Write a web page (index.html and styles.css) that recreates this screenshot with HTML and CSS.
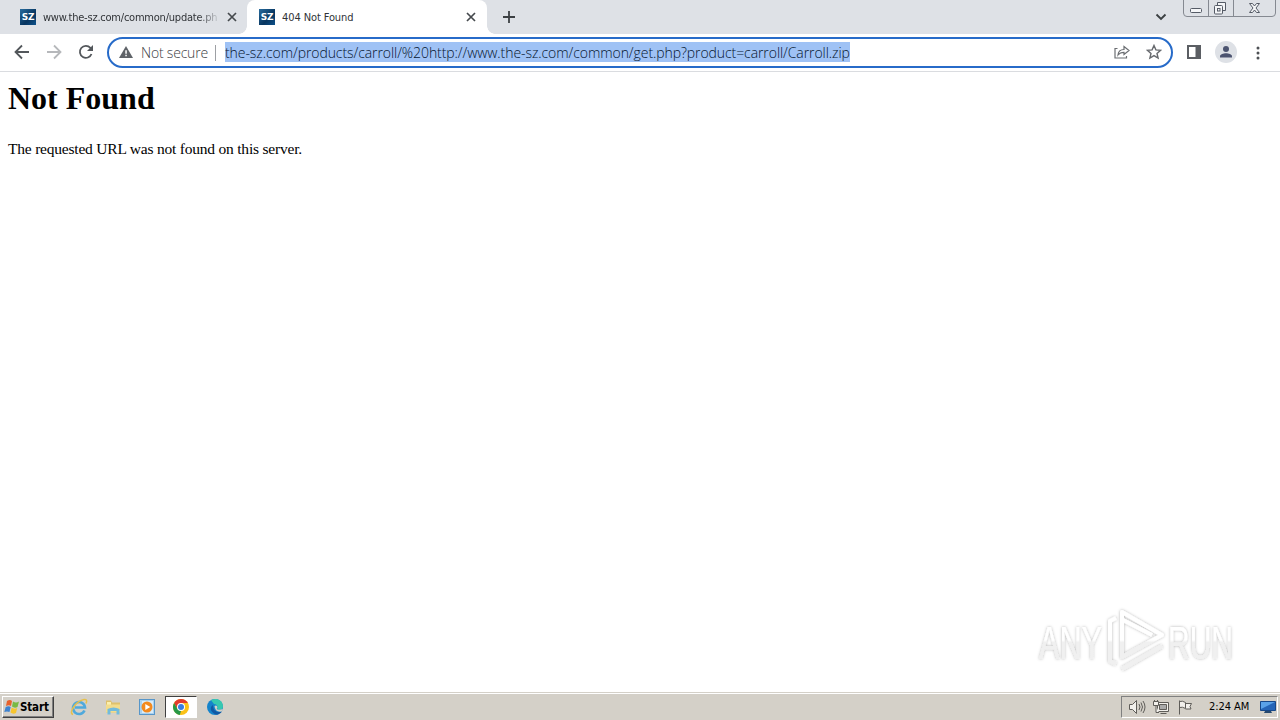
FILE: index.html
```html
<!DOCTYPE html>
<html lang="en">
<head>
<meta charset="utf-8">
<title>404 Not Found</title>
<link rel="stylesheet" href="styles.css">
</head>
<body>
<div class="screen">
  <header class="tabstrip">
    <div class="tab tab-first">
      <span class="favicon">SZ</span>
      <span class="tab-title fade"><span class="t-update">www.the-sz.com/common/update.ph</span></span>
      <svg class="close" viewBox="0 0 10 10"><path d="M1 1l8 8M9 1l-8 8"/></svg>
    </div>
    <div class="tab tab-active">
      <span class="favicon">SZ</span>
      <span class="tab-title"><span class="t-404">404 Not Found</span></span>
      <svg class="close" viewBox="0 0 10 10"><path d="M1 1l8 8M9 1l-8 8"/></svg>
    </div>
    <svg class="new-tab" viewBox="0 0 12 12"><path d="M6 0v12M0 6h12"/></svg>
    <svg class="tab-search" viewBox="0 0 12 8"><path d="M1.500 1.500L6 6l4.500-4.500"/></svg>
    <svg class="window-controls" viewBox="0 0 94 18">
      <path class="frame" d="M.5 0v13q0 3.500 3.500 3.500h85q3.500 0 3.500-3.500V0M25.500 0v16M50.500 0v16"/>
      <rect class="glyph" x="7.500" y="8.500" width="11" height="4" rx="1"/>
      <path class="glyph" d="M34.500 5V2.500h8v8H40"/>
      <rect class="glyph" x="31.500" y="5.500" width="8" height="8.500" rx="1"/>
      <rect class="glyph" x="34.500" y="8.500" width="2.500" height="2.500"/>
      <path class="glyph" d="M66.500 3.500h3l2 2.500 2-2.500h3l-3.500 4.500 3.500 4.500h-3l-2-2.500-2 2.500h-3L70 8z"/>
    </svg>
  </header>

  <nav class="toolbar">
    <svg class="nav-icon back" viewBox="0 0 16 16"><path d="M15 8H2M8 1.500L1.500 8 8 14.500"/></svg>
    <svg class="nav-icon forward" viewBox="0 0 16 16"><path d="M1 8h13M8 1.500L14.500 8 8 14.500"/></svg>
    <svg class="nav-icon reload" viewBox="0 0 16 16"><path d="M13.500 10A6 6 0 1 1 12.400 3.900L14 5.500"/><path class="solid" d="M15 1v6H9z"/></svg>
    <div class="omnibox">
      <svg class="warning" viewBox="0 0 14 12"><path fill="#5f6368" d="M7 0l7 12H0z"/><path fill="#fff" d="M6.300 4.300h1.500v3.500H6.300zM6.300 8.800h1.500v1.500H6.300z"/></svg>
      <span class="not-secure">Not secure</span>
      <span class="divider"></span>
      <span class="url">the-sz.com/products/carroll/%20http://www.the-sz.com/common/get.php?product=carroll/Carroll.zip</span>
      <svg class="share" viewBox="0 0 16 14"><path d="M3.500 3.500H1V13h11.500v-2M4 10c.3-4 2.500-5.500 6-5.500V1.500L15 5.500l-5 4V7.300C7.500 7.300 5.500 8 4 10z"/></svg>
      <svg class="star" viewBox="0 0 16 16"><path d="M8 1.500l1.900 4.400 4.700.4-3.600 3.100 1.100 4.600L8 11.600 3.900 14 5 9.400 1.400 6.300l4.700-.4z"/></svg>
    </div>
    <svg class="side-panel" viewBox="0 0 14 14"><path fill="#5b5e63" fill-rule="evenodd" d="M0 0h14v14H0zM2 2v10h6.500V2z"/></svg>
    <svg class="avatar" viewBox="0 0 22 22"><circle cx="11" cy="11" r="11" fill="#dee1e6"/><circle cx="11" cy="8" r="3" fill="#4c5470"/><path fill="#4c5470" d="M5 16.500v-1.200c0-2 3.500-3 6-3s6 1 6 3v1.200z"/></svg>
    <svg class="menu" viewBox="0 0 4 14"><circle cx="2" cy="2" r="1.500"/><circle cx="2" cy="7" r="1.500"/><circle cx="2" cy="12" r="1.500"/></svg>
  </nav>

  <main class="page">
    <h1>Not Found</h1>
    <p>The requested URL was not found on this server.</p>
    <svg class="watermark" viewBox="0 0 220 80">
      <defs>
        <filter id="soft" x="-10%" y="-10%" width="120%" height="120%"><feDropShadow dx="0" dy="0" stdDeviation="1.700" flood-color="#000" flood-opacity=".3"/></filter>
        <linearGradient id="shine" x1="0" y1="0" x2="0" y2="80" gradientUnits="userSpaceOnUse"><stop offset=".5" stop-color="#fff"/><stop offset=".53" stop-color="#f0f0f0"/></linearGradient>
      </defs>
      <g filter="url(#soft)">
        <text x="14" y="59" textLength="63" lengthAdjust="spacingAndGlyphs">ANY</text>
        <text x="143" y="59" textLength="65" lengthAdjust="spacingAndGlyphs">RUN</text>
        <path class="mark" d="M97 30V12l40 23-40 22V30M91 18l-6 3v40l6 3M97 69l40-23M98 20l29 15"/>
      </g>
    </svg>
  </main>

  <footer class="taskbar">
    <div class="start">
      <svg class="flag" viewBox="0 0 16 16"><path fill="#e8622c" d="M3 2q3-2 5 0L7 7Q5 5.500 2 7z"/><path fill="#78b943" d="M9 2.500q3 2 6 0L13.500 8q-3 1.500-5.500-.5z"/><path fill="#3e83d0" d="M1.700 8q3-1.500 5 0l-1.200 5Q3 12 .3 13z"/><path fill="#f7c52d" d="M7.700 8.500q2.500 2 5.500.5L12 14q-3 1.500-5.500-.5z"/></svg>
      <span class="start-text">Start</span>
    </div>
    <div class="launch">
      <svg viewBox="0 0 18 18"><path fill="none" stroke="#4fa9dc" stroke-width="2.600" d="M14.500 12.500A6 6 0 1 1 15 9.500H5"/><path fill="none" stroke="#e6c04c" stroke-width="1.500" d="M3 16.500C-2 15 6 3 14 1.500q4-.5 2 4"/></svg>
    </div>
    <div class="launch">
      <svg viewBox="0 0 18 18"><path fill="#dfc16c" d="M2 2.500h5l1 2h8v10H2z"/><path fill="#fbf0ae" d="M3 4h4v8H3z"/><path fill="#f3dc8c" d="M2 6.500h14v8H2z"/><path fill="#72bbdc" d="M3.500 11q6-3 12 0v5.500h-3V13h-6v3.500h-3z"/></svg>
    </div>
    <div class="launch">
      <svg viewBox="0 0 18 18"><rect x="1.500" y="1.500" width="15" height="15" fill="#a9d2f0" stroke="#5796c9"/><rect x="4" y="3" width="11" height="12" fill="#d9ecf9"/><circle cx="9" cy="9" r="5.500" fill="#f38a1e"/><path fill="#fff" d="M7.300 6l5 3-5 3z"/></svg>
    </div>
    <div class="launch pressed">
      <svg viewBox="0 0 18 18"><circle cx="9" cy="9" r="8" fill="#fbc116"/><path fill="#e33b2e" d="M2.100 5A8 8 0 0 1 15.900 5H9L5.500 11z"/><path fill="#279847" d="M2.100 5l3.400 6 3.500 2-1.200 4A8 8 0 0 1 2.100 5z"/><circle cx="9" cy="9" r="4" fill="#fff"/><circle cx="9" cy="9" r="3" fill="#397de2"/></svg>
    </div>
    <div class="launch">
      <svg viewBox="0 0 18 18"><circle cx="9" cy="9" r="8" fill="#1584cb"/><path fill="#37c8b0" d="M5 2.200C10-.7 16.500 2 17 8c0 4-4 4.500-6 3 1.500-2 0-5-3-5z"/><path fill="#1259a4" d="M7 7c-5 3-1 9 4 9.700 2-.3 3.800-1.500 5-3.200-4 1.500-9 0-9-6.500z"/><path fill="#d4d0c8" d="M8.500 8q1.500-1 2.500 0 1 1.500-.3 3 1.500 1.500 6.300 0l-1.500 2.500q-6.500 1-7-5.500z"/></svg>
    </div>
    <div class="tray">
      <svg class="tray-icon" viewBox="0 0 18 16"><path d="M1.500 5.500h3l4-4v13l-4-4h-3z"/><path class="thin" d="M11 5q2 3 0 6M13 3.500q3 4.500 0 9M15 2q4 6 0 12"/></svg>
      <svg class="tray-icon" viewBox="0 0 18 16"><path d="M5.500 3.500h11v9h-11z"/><path fill="#aaa" d="M7.500 5.500h7v5h-7zM8.500 14.500h6"/><path d="M1.500 2.500h5v4h-5zM2.500 1v2M5.500 1v2M4 6.500v7h3"/></svg>
      <svg class="tray-icon" viewBox="0 0 18 16"><path d="M3.500 1.500v14M3.500 2.500q3-1 6 1v6q-3-2-6-1M9.500 4.500h6l-1.500 3 1 2.500H9.500"/></svg>
      <span class="clock">2:24 AM</span>
      <svg class="desktop" viewBox="0 0 16 14"><path fill="#2565b7" stroke="#174889" d="M.5 1.500h15v9H.5z"/><path fill="#5aa2e8" d="M1 2h14L1 9z"/><path fill="#26496f" d="M5 11h6l1 2H4z"/></svg>
    </div>
  </footer>
</div>
</body>
</html>
```

FILE: styles.css
```css
* { box-sizing: border-box; }
body { margin: 0; background: #fff; overflow: hidden; }
svg { display: block; flex: none; }
.screen { width: 1280px; height: 720px; display: flex; flex-direction: column; }

.tabstrip { height: 34px; flex: none; display: flex; background: #dee1e6; }
.tab { display: flex; align-items: center; height: 34px; }
.tab-first { width: 247px; padding-left: 20px; }
.tab-active { position: relative; width: 240px; padding-left: 12px; background: #fff; border-radius: 8px 8px 0 0; }
.tab-active::before, .tab-active::after { content: ""; position: absolute; bottom: 0; width: 8px; height: 8px; }
.tab-active::before { left: -8px; background: radial-gradient(circle at 0 0, transparent 7.500px, #fff 8px); }
.tab-active::after { right: -8px; background: radial-gradient(circle at 100% 0, transparent 7.500px, #fff 8px); }
.favicon { width: 16px; height: 16px; flex: none; background: linear-gradient(135deg, #286c9e, #08355f 60%, #0d528c); color: #fff; font: bold 9px/16px "DejaVu Sans", sans-serif; letter-spacing: -.3px; text-align: center; }
.tab-title { width: 176px; margin-left: 7px; padding-top: 1px; overflow: hidden; white-space: nowrap; color: #303337; font: 11px/16px "DejaVu Sans Condensed", "DejaVu Sans", sans-serif; }
.fade { -webkit-mask-image: linear-gradient(90deg, #000 155px, transparent 178px); mask-image: linear-gradient(90deg, #000 155px, transparent 178px); }
.t-update { letter-spacing: -.22px; }
.t-404 { letter-spacing: -.1px; }
.close { width: 10px; height: 10px; margin-left: 8px; fill: none; stroke: #45494d; stroke-width: 1.700; }
.new-tab { width: 12px; height: 12px; margin: 11px 0 0 16px; fill: none; stroke: #3c4043; stroke-width: 1.800; }
.tab-search { width: 12px; height: 8px; margin: 13px 16px 0 auto; fill: none; stroke: #3c4043; stroke-width: 1.900; }
.window-controls { width: 94px; height: 18px; margin-right: 3px; }
.frame { fill: none; stroke: #858991; }
.glyph { fill: #f4f5f7; stroke: #555b66; }

.toolbar { height: 38px; flex: none; display: flex; align-items: center; padding-bottom: 1px; border-bottom: 1px solid #dadce0; background: #fff; }
.nav-icon { width: 16px; height: 16px; fill: none; stroke: #53575b; stroke-width: 1.800; }
.back { margin-left: 14px; }
.forward { margin-left: 16px; stroke: #b6b8bb; }
.reload { margin-left: 16px; }
.reload .solid { fill: #53575b; stroke: none; }
.omnibox { width: 1066px; height: 31px; flex: none; margin: 1px 0 0 13px; padding-left: 10px; display: flex; align-items: center; border: 2px solid #276bc9; border-radius: 16px; font: 300 14px/20px "Open Sans", "Noto Sans", sans-serif; white-space: nowrap; }
.warning { width: 14px; height: 12px; margin-bottom: 2px; }
.not-secure { width: 67px; margin-left: 8px; color: #3d4044; letter-spacing: -.2px; }
.divider { width: 1px; height: 16px; margin: 0 9px 0 7px; background: #9da0a4; }
.url { width: 625px; height: 20px; margin-bottom: 1px; background: #9fc2f5; color: #061630; line-height: 22px; letter-spacing: -.075px; }
.share { width: 16px; height: 14px; margin: 0 0 1px auto; fill: none; stroke: #6b6e72; stroke-width: 1.200; }
.star { width: 16px; height: 16px; margin: 0 9px 1px 16px; fill: none; stroke: #66696d; stroke-width: 1.400; }
.side-panel { width: 14px; height: 14px; margin-left: 14px; }
.avatar { width: 22px; height: 22px; margin-left: 14px; }
.menu { width: 4px; height: 14px; margin: 1px 0 0 19px; fill: #4d5054; }

.page { position: relative; flex: 1; padding: 8px; font-family: "Liberation Serif", serif; color: #000; }
.page h1 { margin: 0 0 23px; font-size: 32px; line-height: 36px; letter-spacing: 0; }
.page p { margin: 0; font-size: 15.500px; line-height: 19px; letter-spacing: -.21px; }
.watermark { position: absolute; left: 1025px; top: 528px; width: 220px; height: 80px; }
.watermark text { font: 46px "Liberation Sans", sans-serif; fill: url(#shine); }
.mark { fill: none; stroke: url(#shine); stroke-width: 4; stroke-linejoin: round; }

.taskbar { height: 28px; flex: none; display: flex; align-items: center; padding: 2px 2px 2px; background: #d4d0c8; border-top: 1px solid #d4d0c8; box-shadow: inset 0 1px #fff; font-family: "DejaVu Sans Condensed", "DejaVu Sans", sans-serif; }
.start { width: 52px; height: 22px; margin-right: 9px; padding-left: 1px; display: flex; align-items: center; border: 1px solid; border-color: #fff #404040 #404040 #fff; box-shadow: inset -1px -1px #808080; }
.flag { width: 16px; height: 16px; }
.start-text { color: #000; font-size: 11.500px; font-weight: bold; letter-spacing: -.15px; }
.launch { width: 32px; height: 22px; margin-right: 2px; display: flex; align-items: center; justify-content: center; }
.launch svg { width: 18px; height: 18px; }
.pressed { background: #fff; border: 1px solid; border-color: #404040 #fff #fff #404040; }
.tray { width: 157px; height: 22px; margin-left: auto; padding: 0 1px 0 6px; display: flex; align-items: center; border: 1px solid; border-color: #808080 #fff #fff #808080; }
.tray-icon { width: 18px; height: 16px; margin-right: 6px; fill: #f2f0ec; stroke: #5f5d59; }
.thin { fill: none; }
.clock { width: 42px; margin-left: 9px; white-space: nowrap; color: #000; font-size: 11px; letter-spacing: -.05px; }
.desktop { width: 16px; height: 14px; margin-left: auto; }
```
